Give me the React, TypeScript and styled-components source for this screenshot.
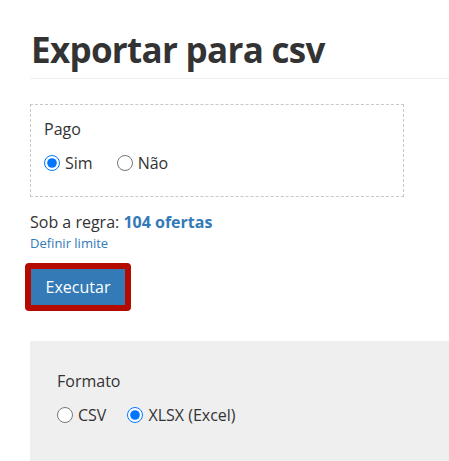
import React, { useState } from "react";
import styled, { createGlobalStyle } from "styled-components";

const GlobalStyle = createGlobalStyle`
  body {
    margin: 0;
    background: #ffffff;
    font-family: "Open Sans", "Liberation Sans", sans-serif;
    color: #333333;
  }
`;

const Page = styled.div`
  padding: 0 0 0 30px;
  overflow: hidden;
`;

const Title = styled.h1`
  margin: 30px 0 0 1px;
  font-size: 35px;
  line-height: 40px;
  font-weight: 700;
  letter-spacing: -0.7px;
  color: #333333;
`;

const Divider = styled.hr`
  margin: 8px 0 0;
  border: none;
  border-top: 1px solid #eeeeee;
`;

const FilterBox = styled.fieldset`
  margin: 25px 0 0;
  width: 374px;
  box-sizing: border-box;
  height: 93px;
  border: 1px dashed #c8c8c8;
  padding: 14px 13px;
`;

const Label = styled.div`
  font-size: 16px;
  line-height: 20px;
  color: #333333;
`;

const RadioRow = styled.div<{ $gap: number }>`
  display: flex;
  align-items: center;
  gap: ${(p) => p.$gap}px;
  margin-top: 14px;
`;

const RadioLabel = styled.label`
  display: flex;
  align-items: center;
  gap: 5px;
  font-size: 16px;
  line-height: 20px;
  color: #333333;
  cursor: pointer;
`;

const Radio = styled.input`
  width: 16px;
  height: 16px;
  margin: 0;
`;

const RuleText = styled.div`
  margin-top: 15px;
  font-size: 16px;
  line-height: 20px;
  color: #333333;
`;

const Count = styled.strong`
  color: #337ab7;
`;

const LimitLink = styled.a`
  display: block;
  margin-top: 3px;
  font-size: 13px;
  line-height: 16px;
  color: #337ab7;
  text-decoration: none;
`;

const ButtonFrame = styled.div`
  display: inline-block;
  margin: 12px 0 0 -5px;
  border: 6px solid #b50a00;
  border-radius: 4px;
`;

const RunButton = styled.button`
  display: block;
  width: 94px;
  height: 36px;
  border: none;
  background: #337ab7;
  color: #ffffff;
  font-family: inherit;
  font-size: 16px;
  cursor: pointer;
`;

const FormatPanel = styled.div`
  margin-top: 30px;
  background: #efefef;
  height: 130px;
  padding: 30px 27px;
  box-sizing: border-box;
`;

type Option = { value: string; label: string };

const RadioGroup: React.FC<{
  name: string;
  options: Option[];
  value: string;
  gap: number;
  onChange: (v: string) => void;
}> = ({ name, options, value, gap, onChange }) => (
  <RadioRow $gap={gap}>
    {options.map((o) => (
      <RadioLabel key={o.value}>
        <Radio
          type="radio"
          name={name}
          checked={value === o.value}
          onChange={() => onChange(o.value)}
        />
        {o.label}
      </RadioLabel>
    ))}
  </RadioRow>
);

export default function App() {
  const [pago, setPago] = useState("sim");
  const [formato, setFormato] = useState("xlsx");

  return (
    <Page>
      <GlobalStyle />
      <Title>Exportar para csv</Title>
      <Divider />
      <FilterBox>
        <Label>Pago</Label>
        <RadioGroup
          name="pago"
          gap={24}
          value={pago}
          onChange={setPago}
          options={[
            { value: "sim", label: "Sim" },
            { value: "nao", label: "Não" },
          ]}
        />
      </FilterBox>
      <RuleText>
        Sob a regra: <Count>104 ofertas</Count>
      </RuleText>
      <LimitLink href="#">Definir limite</LimitLink>
      <ButtonFrame>
        <RunButton>Executar</RunButton>
      </ButtonFrame>
      <FormatPanel>
        <Label>Formato</Label>
        <RadioGroup
          name="formato"
          gap={21}
          value={formato}
          onChange={setFormato}
          options={[
            { value: "csv", label: "CSV" },
            { value: "xlsx", label: "XLSX (Excel)" },
          ]}
        />
      </FormatPanel>
    </Page>
  );
}
